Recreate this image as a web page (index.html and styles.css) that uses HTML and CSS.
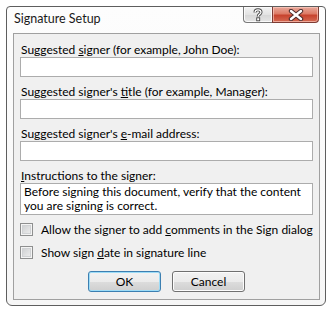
FILE: index.html
```html
<!DOCTYPE html>
<html>
  <head>
    <meta charset="utf-8">
    <title>Signature Setup</title>
    <link rel="stylesheet" href="styles.css">
  </head>
  <body>
    <div class="window">
      <div class="titlebar">
        <span class="title">Signature Setup</span>
        <div class="caption">
          <span class="cap help">
            <svg width="12" height="14" viewBox="0 0 12 14">
              <path d="M3 4.5 C3 2.5 4.5 1.8 6 1.8 C7.8 1.8 9 2.8 9 4.3 C9 6.2 6.2 6.4 6.2 8.4" fill="none" stroke="#444" stroke-width="3"/>
              <path d="M3 4.5 C3 2.5 4.5 1.8 6 1.8 C7.8 1.8 9 2.8 9 4.3 C9 6.2 6.2 6.4 6.2 8.4" fill="none" stroke="#fff" stroke-width="1.3"/>
              <rect x="4.7" y="9.8" width="3" height="3" fill="#fff" stroke="#444" stroke-width="0.9"/>
            </svg>
          </span>
          <span class="cap close">
            <svg width="16" height="12" viewBox="0 0 16 12">
              <path d="M3 2 L13 10 M13 2 L3 10" stroke="#4a2a2a" stroke-width="4.4" stroke-linecap="round"/>
              <path d="M3 2 L13 10 M13 2 L3 10" stroke="#fff" stroke-width="2.4" stroke-linecap="round"/>
            </svg>
          </span>
        </div>
      </div>

      <div class="panel">
        <div class="field">
          <label>Suggested <u>s</u>igner (for example, John Doe):</label>
          <div class="input"></div>
        </div>
        <div class="field">
          <label>Suggested signer's <u>t</u>itle (for example, Manager):</label>
          <div class="input"></div>
        </div>
        <div class="field">
          <label>Suggested signer's <u>e</u>-mail address:</label>
          <div class="input"></div>
        </div>
        <div class="field">
          <label><u>I</u>nstructions to the signer:</label>
          <div class="input textarea">Before signing this document, verify that the content you are signing is correct.</div>
        </div>

        <div class="checks">
          <div class="check"><span class="box"></span><span>Allow the signer to add <u>c</u>omments in the Sign dialog</span></div>
          <div class="check"><span class="box"></span><span>Show sign <u>d</u>ate in signature line</span></div>
        </div>

        <div class="actions">
          <span class="btn default">OK</span>
          <span class="btn">Cancel</span>
        </div>
      </div>
    </div>
  </body>
</html>
```

FILE: styles.css
```css
html, body {
  margin: 0;
  padding: 0;
  background-color: #fff;
}

body {
  font-family: Lato, "Noto Sans", sans-serif;
  font-size: 12px;
  color: #000;
}

.window {
  width: 318px;
  height: 298px;
  margin: 6px 0 0 6px;
  border: 1px solid #5e5e5e;
  border-radius: 4px 4px 6px 6px;
  background: linear-gradient(#fdfdfd, #f6f6f6);
  display: flex;
  flex-direction: column;
}

.titlebar {
  height: 26px;
  display: flex;
  justify-content: space-between;
  align-items: flex-start;
}

.title {
  padding: 3px 0 0 7px;
  line-height: 17px;
  font-size: 12.5px;
  color: #1a1a1a;
}

.caption {
  display: flex;
  margin-right: 6px;
}

.cap {
  height: 15px;
  border: 1px solid #7a7a7a;
  border-top: none;
  display: flex;
  align-items: center;
  justify-content: center;
}

.help {
  width: 28px;
  border-right: none;
  border-radius: 0 0 0 4px;
  background: linear-gradient(#f3f3f3, #e3e3e3 50%, #d6d6d6 51%, #e6e6e6);
  box-shadow: inset 0 0 0 1px #fafafa;
}

.close {
  width: 45px;
  border-color: #7d3b33;
  border-radius: 0 0 4px 0;
  background: linear-gradient(#e9a99b, #dd7b66 45%, #c7432e 55%, #d56a52);
  box-shadow: inset 0 0 0 1px rgba(255, 210, 200, 0.6);
}

.panel {
  flex: 1;
  margin: 0 5px 5px 6px;
  border: 1px solid #a0a0a0;
  background-color: #f0f0f0;
  padding: 1px 6px 7px 6px;
  display: flex;
  flex-direction: column;
}

.field {
  margin-top: 6px;
}

.field label {
  display: block;
  line-height: 15px;
  padding: 1px 0 0 1px;
}

.input {
  height: 18px;
  border: 1px solid #acacac;
  background-color: #fff;
}

.textarea {
  height: 28px;
  padding: 1px 3px 1px 3px;
  line-height: 14px;
}

.checks {
  margin-top: 8px;
}

.check {
  display: flex;
  align-items: center;
  height: 13px;
  margin-bottom: 10px;
  white-space: nowrap;
}

.box {
  flex-shrink: 0;
  width: 11px;
  height: 11px;
  margin-right: 8px;
  border: 1px solid #8e8f8f;
  background: linear-gradient(135deg, #c9cbcd, #f2f2f2);
  box-shadow: inset 0 0 0 1px #f4f4f4, inset 0 0 0 2px #d0d2d4;
}

.actions {
  margin-top: auto;
  display: flex;
  justify-content: center;
  gap: 11px;
}

.btn {
  width: 71px;
  height: 19px;
  line-height: 19px;
  text-align: center;
  border: 1px solid #707070;
  border-radius: 3px;
  background: linear-gradient(#f2f2f2, #ebebeb 50%, #dddddd 51%, #cfcfcf);
  box-shadow: inset 0 0 0 1px #fcfcfc;
}

.btn.default {
  border-color: #3c7fb1;
  box-shadow: inset 0 0 0 1px #9ddcf7;
}
```
